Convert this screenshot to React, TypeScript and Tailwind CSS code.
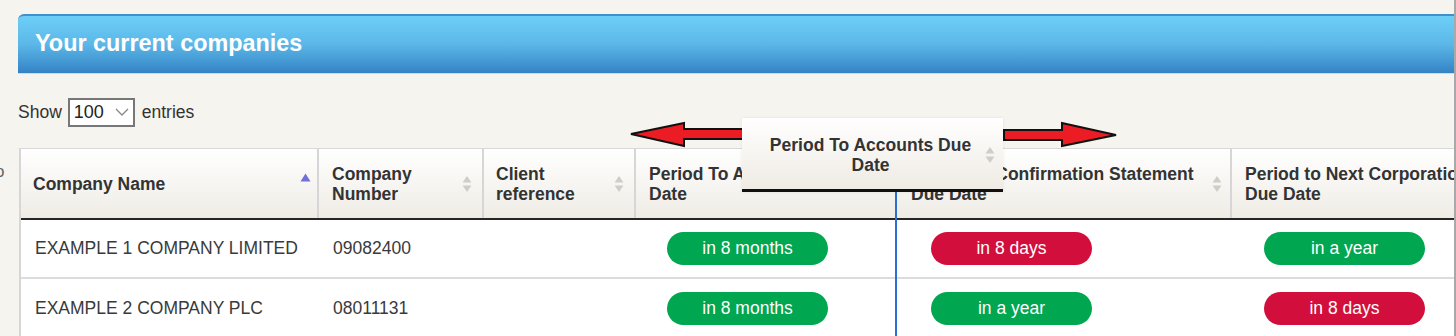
import React from "react";

type Pill = { text: string; tone: "green" | "red" } | null;

interface Row {
  name: string;
  number: string;
  ref: string;
  accounts: Pill;
  confirmation: Pill;
  corpTax: Pill;
}

const rows: Row[] = [
  {
    name: "EXAMPLE 1 COMPANY LIMITED",
    number: "09082400",
    ref: "",
    accounts: { text: "in 8 months", tone: "green" },
    confirmation: { text: "in 8 days", tone: "red" },
    corpTax: { text: "in a year", tone: "green" },
  },
  {
    name: "EXAMPLE 2 COMPANY PLC",
    number: "08011131",
    ref: "",
    accounts: { text: "in 8 months", tone: "green" },
    confirmation: { text: "in a year", tone: "green" },
    corpTax: { text: "in 8 days", tone: "red" },
  },
];

function SortBoth() {
  return (
    <svg width="10" height="18" viewBox="0 0 10 18" className="shrink-0">
      <polygon points="5,1 9.5,7.5 0.5,7.5" fill="#cfcdca" />
      <polygon points="0.5,10.5 9.5,10.5 5,17" fill="#cfcdca" />
    </svg>
  );
}

function SortAsc() {
  return (
    <svg width="11" height="9" viewBox="0 0 11 9" className="shrink-0">
      <polygon points="5.5,0.5 10.5,8.5 0.5,8.5" fill="#7070d8" />
    </svg>
  );
}

function StatusPill({ pill, offset }: { pill: Pill; offset: string }) {
  if (!pill) return null;
  return (
    <div
      className={`${offset} w-[161px] h-[33px] rounded-full flex items-center justify-center text-white text-[17.5px] ${
        pill.tone === "green" ? "bg-[#00a650]" : "bg-[#d20f3c]"
      }`}
    >
      {pill.text}
    </div>
  );
}

export default function App() {
  return (
    <div className="w-[1456px] h-[336px] overflow-hidden flex bg-[#f6f4ef] font-['Liberation_Sans',Arial,sans-serif]">
      <div className="w-[1454px] shrink-0 flex flex-col pt-[14px] pl-[18px] overflow-hidden">
        {/* Banner */}
        <div className="h-[60px] shrink-0 rounded-tl-[6px] border-t-2 border-[#3f90cc] bg-gradient-to-b from-[#6dcff8] via-[#5bb7e7] to-[#3483c5] flex items-center pl-[17px] border-b border-b-[#c9dbe7]">
          <h2 className="text-white font-bold text-[23.4px] leading-none -mt-[1px]">
            Your current companies
          </h2>
        </div>

        {/* Show entries */}
        <div className="flex items-center mt-[24px] text-[17.5px] text-[#333] h-[29px]">
          <span>Show</span>
          <div className="ml-[6px] w-[67px] h-[29px] border-2 border-[#777] bg-white flex items-center justify-between pl-[4px] pr-[4px]">
            <span className="text-[18px] text-[#222]">100</span>
            <svg width="14" height="9" viewBox="0 0 14 9">
              <polyline points="1,1 7,7 13,1" fill="none" stroke="#888" strokeWidth="1.3" />
            </svg>
          </div>
          <span className="ml-[7px]">entries</span>
        </div>

        {/* Table */}
        <div className="flex mt-[21px] -ml-[18px]">
          <div className="w-[19px] shrink-0 overflow-hidden">
            <span className="block -ml-[5px] mt-[11px] text-[17px] text-[#666]">o</span>
          </div>
          <div className="relative flex-1">
            <div className="overflow-hidden">
              <div className="w-[1600px] border-l-2 border-[#d6d6d6]">
                {/* Header row */}
                <div className="flex h-[72px] border-t border-[#d8d8d8] border-b-2 border-b-[#262626] bg-gradient-to-b from-white to-[#efece5] text-[17.5px] font-bold text-[#333] leading-[20px]">
                  <div className="w-[298px] shrink-0 border-r-2 border-[#d6d6d6] flex items-center justify-between pl-[12px] pr-[6px]">
                    <span>Company Name</span>
                    <span className="-mt-[12px]">
                      <SortAsc />
                    </span>
                  </div>
                  <div className="w-[165px] shrink-0 border-r-2 border-[#d6d6d6] flex items-center justify-between pl-[13px] pr-[10px]">
                    <span>
                      Company
                      <br />
                      Number
                    </span>
                    <SortBoth />
                  </div>
                  <div className="w-[152px] shrink-0 border-r-2 border-[#d6d6d6] flex items-center justify-between pl-[12px] pr-[10px]">
                    <span>
                      Client
                      <br />
                      reference
                    </span>
                    <SortBoth />
                  </div>
                  <div className="w-[261px] shrink-0 flex items-center justify-between pl-[13px] pr-[10px]">
                    <span>
                      Period To Accounts Due
                      <br />
                      Date
                    </span>
                  </div>
                  <div className="w-[335px] shrink-0 border-r-2 border-[#d6d6d6] flex items-center justify-between pl-[14px] pr-[8px]">
                    <span>
                      Period To Confirmation Statement
                      <br />
                      Due Date
                    </span>
                    <SortBoth />
                  </div>
                  <div className="w-[360px] shrink-0 flex items-center pl-[13px]">
                    <span>
                      Period to Next Corporation Tax
                      <br />
                      Due Date
                    </span>
                  </div>
                </div>

                {/* Body rows */}
                {rows.map((r, i) => (
                  <div
                    key={r.number}
                    className={`flex h-[59px] bg-white text-[17.5px] text-[#3a3a3a] ${
                      i < rows.length - 1 ? "border-b-2 border-[#dcdcdc]" : ""
                    }`}
                  >
                    <div className="w-[298px] shrink-0 flex items-center pl-[14px]">{r.name}</div>
                    <div className="w-[165px] shrink-0 flex items-center pl-[14px]">{r.number}</div>
                    <div className="w-[152px] shrink-0 flex items-center pl-[14px]">{r.ref}</div>
                    <div className="w-[261px] shrink-0 flex items-center">
                      <StatusPill pill={r.accounts} offset="ml-[31px]" />
                    </div>
                    <div className="w-[335px] shrink-0 flex items-center">
                      <StatusPill pill={r.confirmation} offset="ml-[34px]" />
                    </div>
                    <div className="w-[360px] shrink-0 flex items-center">
                      <StatusPill pill={r.corpTax} offset="ml-[32px]" />
                    </div>
                  </div>
                ))}
              </div>
            </div>

            {/* Drop indicator */}
            <div className="absolute left-[876px] top-[42px] bottom-0 w-[2px] bg-[#2b6fd0]" />

            {/* Left arrow */}
            <svg
              className="absolute left-[609px] -top-[28px]"
              width="120"
              height="28"
              viewBox="0 0 120 28"
            >
              <polygon
                points="3,14 56,3 56,9 119,9 119,19 56,19 56,26"
                fill="#ec1c24"
                stroke="#111"
                strokeWidth="2"
                strokeLinejoin="miter"
              />
            </svg>

            {/* Right arrow */}
            <svg
              className="absolute left-[984px] -top-[28px]"
              width="116"
              height="28"
              viewBox="0 0 116 28"
            >
              <polygon
                points="1,10 59,10 59,3 113,15 59,26 59,20 1,20"
                fill="#ec1c24"
                stroke="#111"
                strokeWidth="2"
                strokeLinejoin="miter"
              />
            </svg>

            {/* Dragged header */}
            <div className="absolute left-[723px] -top-[30px] w-[261px] h-[74px] border-b-[3px] border-[#111] bg-gradient-to-b from-white to-[#efebe4] flex items-center pl-[14px] pr-[8px] text-[17.5px] font-bold text-[#333] leading-[20px] shadow-[0_0_3px_rgba(0,0,0,0.08)]">
              <span className="flex-1 text-center mt-[3px]">
                Period To Accounts Due
                <br />
                Date
              </span>
              <span className="mt-[2px]">
                <SortBoth />
              </span>
            </div>
          </div>
        </div>
      </div>
      <div className="w-[2px] shrink-0 bg-[#a9a9a9]" />
    </div>
  );
}
